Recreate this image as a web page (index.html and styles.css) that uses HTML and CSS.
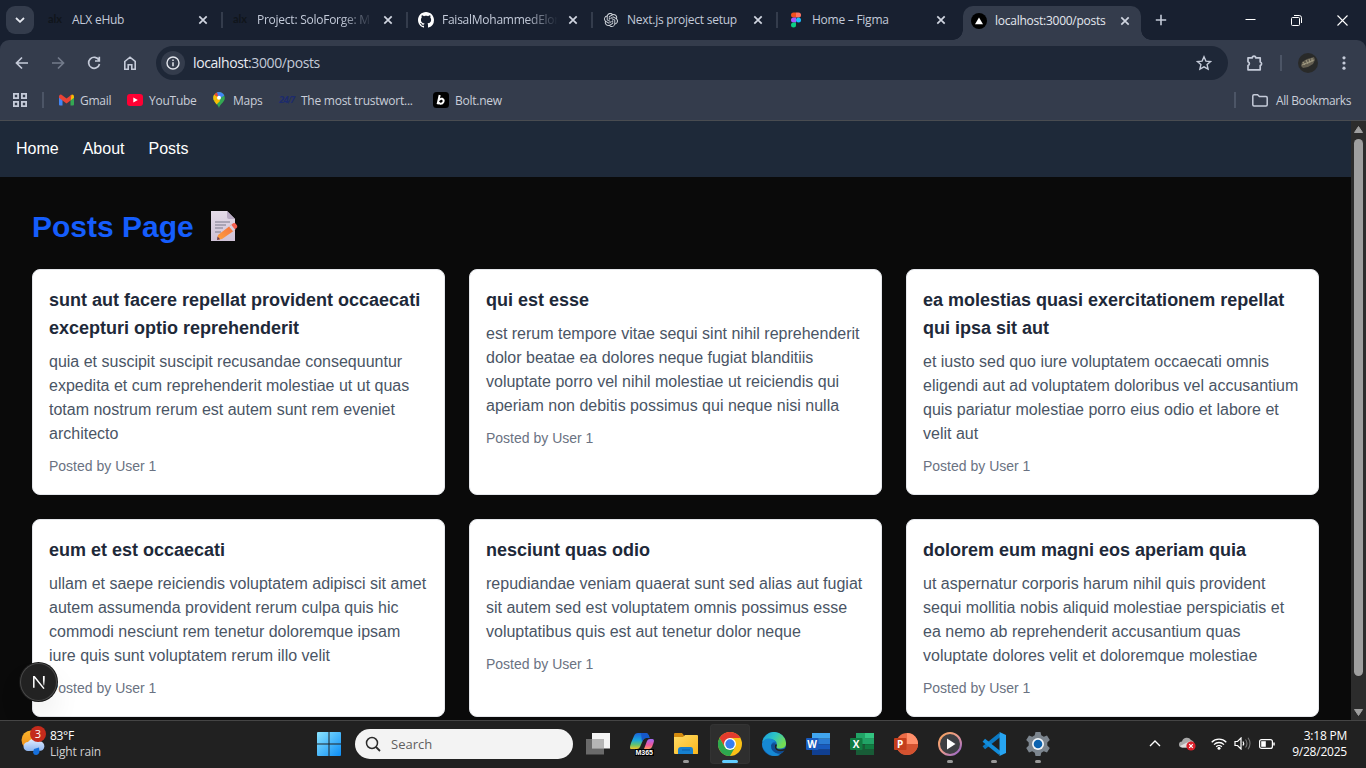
FILE: index.html
```html
<!DOCTYPE html>
<html lang="en">
<head>
<meta charset="utf-8">
<title>localhost:3000/posts</title>
<link rel="stylesheet" href="styles.css">
</head>
<body>
<svg class="defs" width="0" height="0">
  <defs>
    <linearGradient id="win" x1="0" y1="0" x2="1" y2="1"><stop offset="0" stop-color="#8be4ff"/><stop offset="1" stop-color="#0c8df5"/></linearGradient>
    <linearGradient id="sun" x1="0" y1="0" x2="0" y2="1"><stop offset="0" stop-color="#f9b42c"/><stop offset="1" stop-color="#ef8b17"/></linearGradient>
    <linearGradient id="cloud" x1="0" y1="0" x2="0" y2="1"><stop offset="0" stop-color="#e2edff"/><stop offset="1" stop-color="#8fb6ee"/></linearGradient>
    <linearGradient id="cop1" x1="0" y1="0" x2="0" y2="1"><stop offset="0" stop-color="#1b63d8"/><stop offset=".45" stop-color="#19a7dd"/><stop offset=".75" stop-color="#67c46a"/><stop offset="1" stop-color="#f2c32b"/></linearGradient>
    <linearGradient id="cop2" x1="0" y1="0" x2="0" y2="1"><stop offset="0" stop-color="#a06af5"/><stop offset=".6" stop-color="#f0569c"/><stop offset="1" stop-color="#ff9b62"/></linearGradient>
    <linearGradient id="fold" x1="0" y1="0" x2="1" y2="1"><stop offset="0" stop-color="#ffdc66"/><stop offset="1" stop-color="#f9b61c"/></linearGradient>
    <linearGradient id="edge1" x1="0" y1="0" x2="1" y2=".5"><stop offset="0" stop-color="#1a9be0"/><stop offset=".5" stop-color="#2cc3c6"/><stop offset="1" stop-color="#74dc52"/></linearGradient>
    <linearGradient id="ring" x1="0" y1="0" x2="1" y2="1"><stop offset="0" stop-color="#f6a25a"/><stop offset=".5" stop-color="#e89a90"/><stop offset="1" stop-color="#8d5ed0"/></linearGradient>
    <linearGradient id="paper" x1="0" y1="0" x2="0" y2="1"><stop offset="0" stop-color="#e4dbe8"/><stop offset="1" stop-color="#cfc2d6"/></linearGradient>
    <linearGradient id="pencil" x1="0" y1="1" x2="1" y2="0"><stop offset="0" stop-color="#ffa23c"/><stop offset="1" stop-color="#f36d42"/></linearGradient>
    <linearGradient id="nlet" gradientUnits="userSpaceOnUse" x1="0" y1="1" x2="0" y2="11"><stop offset=".3" stop-color="#fff"/><stop offset="1" stop-color="#fff" stop-opacity=".1"/></linearGradient>
    <symbol id="x" viewBox="0 0 10 10"><path d="M1.3 1.3l7.4 7.4M8.7 1.3l-7.4 7.4" stroke="currentColor" stroke-width="1.7"/></symbol>
  </defs>
</svg>

<header class="browser">
  <div class="tabstrip">
    <button class="tab-search"><svg width="10" height="6" viewBox="0 0 10 6"><path d="M1 1l4 3.8L9 1" fill="none" stroke="#e6e9f0" stroke-width="1.8"/></svg></button>
    <div class="tab"><span class="fav alx">alx</span><span class="tab-title">ALX eHub</span><svg class="close"><use href="#x"/></svg><i class="sep"></i></div>
    <div class="tab"><span class="fav alx">alx</span><span class="tab-title fade">Project: SoloForge: M</span><svg class="close"><use href="#x"/></svg><i class="sep"></i></div>
    <div class="tab"><svg class="fav" viewBox="0 0 16 16"><path fill="#fff" d="M8 0C3.58 0 0 3.58 0 8c0 3.54 2.29 6.53 5.47 7.59.4.07.55-.17.55-.38 0-.19-.01-.82-.01-1.49-2.01.37-2.53-.49-2.69-.94-.09-.23-.48-.94-.82-1.13-.28-.15-.68-.52-.01-.53.63-.01 1.08.58 1.23.82.72 1.21 1.87.87 2.33.66.07-.52.28-.87.51-1.07-1.78-.2-3.64-.89-3.64-3.95 0-.87.31-1.59.82-2.15-.08-.2-.36-1.02.08-2.12 0 0 .67-.21 2.2.82.64-.18 1.32-.27 2-.27s1.36.09 2 .27c1.53-1.04 2.2-.82 2.2-.82.44 1.1.16 1.92.08 2.12.51.56.82 1.27.82 2.15 0 3.07-1.87 3.75-3.65 3.95.29.25.54.73.54 1.48 0 1.07-.01 1.93-.01 2.2 0 .21.15.46.55.38A8.01 8.01 0 0 0 16 8c0-4.42-3.58-8-8-8z"/></svg><span class="tab-title fade">FaisalMohammedElor</span><svg class="close"><use href="#x"/></svg><i class="sep"></i></div>
    <div class="tab"><svg class="fav gpt" viewBox="0 0 24 24"><path fill="#d5d9df" d="M22.28 9.82a5.98 5.98 0 0 0-.52-4.91 6.05 6.05 0 0 0-6.51-2.9A6.07 6.07 0 0 0 4.98 4.18a5.98 5.98 0 0 0-4 2.9 6.05 6.05 0 0 0 .74 7.1 5.98 5.98 0 0 0 .51 4.91 6.05 6.05 0 0 0 6.52 2.9A5.98 5.98 0 0 0 13.26 24a6.06 6.06 0 0 0 5.77-4.21 5.99 5.99 0 0 0 4-2.9 6.06 6.06 0 0 0-.75-7.07zm-9.02 12.61a4.48 4.48 0 0 1-2.88-1.04l.14-.08 4.78-2.76a.8.8 0 0 0 .39-.68v-6.74l2.02 1.17v5.62a4.5 4.5 0 0 1-4.45 4.51zM3.6 18.3a4.47 4.47 0 0 1-.54-3.01l.14.08 4.78 2.76a.77.77 0 0 0 .78 0l5.84-3.37v2.33L9.74 19.95A4.5 4.5 0 0 1 3.6 18.3zM2.34 7.9a4.49 4.49 0 0 1 2.37-1.98v5.68a.77.77 0 0 0 .39.68l5.81 3.35-2.02 1.17-4.83-2.79A4.5 4.5 0 0 1 2.34 7.9zm16.6 3.86l-5.84-3.39L15.12 7.2l4.83 2.79a4.49 4.49 0 0 1-.68 8.1v-5.67a.79.79 0 0 0-.33-.66zm2.01-3.03l-.14-.09-4.77-2.78a.78.78 0 0 0-.79 0L9.41 9.23V6.9l4.86-2.8a4.5 4.5 0 0 1 6.68 4.63zM8.31 12.86l-2.02-1.16V6.07a4.5 4.5 0 0 1 7.38-3.45l-.14.08-4.78 2.76a.8.8 0 0 0-.39.68zm1.1-2.36L12 9l2.61 1.5v3L12 15l-2.6-1.5z"/></svg><span class="tab-title">Next.js project setup</span><svg class="close"><use href="#x"/></svg><i class="sep"></i></div>
    <div class="tab last"><svg class="fav" viewBox="0 0 16 16"><path fill="#f24e1e" d="M8 .5H5.5a2.5 2.5 0 0 0 0 5H8z"/><path fill="#ff7262" d="M8 .5h2.5a2.5 2.5 0 0 1 0 5H8z"/><path fill="#a259ff" d="M8 5.5H5.5a2.5 2.5 0 0 0 0 5H8z"/><circle cx="10.5" cy="8" r="2.5" fill="#1abcfe"/><path fill="#0acf83" d="M8 10.5H5.5A2.5 2.5 0 1 0 8 13z"/></svg><span class="tab-title">Home – Figma</span><svg class="close"><use href="#x"/></svg></div>
    <div class="tab active"><svg class="fav" viewBox="0 0 16 16"><circle cx="8" cy="8" r="8"/><path d="M8 4.5l4 6.7H4z" fill="#fff"/></svg><span class="tab-title">localhost:3000/posts</span><svg class="close"><use href="#x"/></svg></div>
    <svg class="newtab" width="12" height="12" viewBox="0 0 12 12"><path d="M6 .8v10.4M.8 6h10.4" stroke="#c4cad8" stroke-width="1.6"/></svg>
    <div class="winctl">
      <svg width="11" height="11" viewBox="0 0 11 11"><path d="M.5 4.5h10" stroke="#fff"/></svg>
      <svg width="11" height="11" viewBox="0 0 11 11"><path d="M3 .5h5.2a2.3 2.3 0 0 1 2.3 2.3V8" fill="none" stroke="#fff"/><rect x=".5" y="2.5" width="8" height="8" rx="1" fill="none" stroke="#fff"/></svg>
      <svg width="11" height="11" viewBox="0 0 11 11"><path d="M.5.5l10 10M10.5.5l-10 10" stroke="#fff" stroke-width="1.1"/></svg>
    </div>
  </div>

  <div class="toolbar">
    <div class="navrow">
      <div class="navbtns">
        <svg width="16" height="16" viewBox="0 0 16 16"><path d="M14 8H3M8 2.5L2.5 8 8 13.5" fill="none" stroke="#c5cbd9" stroke-width="1.7"/></svg>
        <svg width="16" height="16" viewBox="0 0 16 16"><path d="M2 8h11M8 2.500L13.500 8 8 13.500" fill="none" stroke="#737b8b" stroke-width="1.7"/></svg>
        <svg width="16" height="16" viewBox="0 0 16 16"><path d="M13 5.2A5.5 5.5 0 1 0 13.500 9M13.300 1.800v4.200H9" fill="none" stroke="#c5cbd9" stroke-width="1.7"/></svg>
        <svg width="16" height="16" viewBox="0 0 16 16"><path d="M2.800 6.500L8 2.200l5.200 4.300v7.700H9.800V9.700H6.200v4.500H2.800z" fill="none" stroke="#c5cbd9" stroke-width="1.6"/></svg>
      </div>
      <div class="address">
        <span class="info"><svg width="14" height="14" viewBox="0 0 14 14"><circle cx="7" cy="7" r="6" fill="none" stroke="#e3e6ed" stroke-width="1.4"/><path d="M7 6.200v4M7 3.500v1.500" stroke="#e3e6ed" stroke-width="1.5"/></svg></span>
        <span class="url"><b>localhost</b>:3000/posts</span>
        <svg class="star" width="16" height="16" viewBox="0 0 16 16"><path d="M8 1.800l1.900 4.300 4.700.4-3.500 3.100 1 4.600L8 11.800l-4.100 2.400 1-4.600L1.400 6.500l4.700-.4z" fill="none" stroke="#c5cbd9" stroke-width="1.4"/></svg>
      </div>
      <div class="actions">
        <svg width="18" height="18" viewBox="0 0 18 18"><path d="M2 3.800h4.300a1.700 1.700 0 0 1 3.400 0h4.500V8a1.800 1.800 0 0 1 0 3.500v4.300H2v-4.300a2 2 0 0 0 0-3.800z" fill="none" stroke="#c5cbd9" stroke-width="1.7" stroke-linejoin="round"/></svg>
        <i class="vline"></i>
        <svg width="20" height="20" viewBox="0 0 20 20"><circle cx="10" cy="10" r="10" fill="#292a29"/><path d="M3 13l1-4 5-3 7-2 1 3-2 4-5 3-5 1z" fill="#625d50"/><path d="M5 9l2 3M8 7l2 4M11 6l1 4M14 5v4M4 12l12-5" stroke="#a69f86" stroke-width=".9"/></svg>
        <svg width="4" height="16" viewBox="0 0 4 16"><g fill="#c5cbd9"><circle cx="2" cy="2.800" r="1.600"/><circle cx="2" cy="8" r="1.600"/><circle cx="2" cy="13.200" r="1.600"/></g></svg>
      </div>
    </div>
    <div class="bookmarks">
      <svg width="14" height="14" viewBox="0 0 14 14"><path d="M.9.9h4.200v4.200H.9zM8.900.9h4.200v4.200H8.900zM.9 8.900h4.200v4.200H.9zM8.900 8.900h4.200v4.200H8.900z" fill="none" stroke="#c5cbd9" stroke-width="1.800"/></svg>
      <i class="vline"></i>
      <span class="bm b1"><svg width="15" height="12" viewBox="0 0 15 12"><path d="M0 2v8.500a1 1 0 0 0 1 1h2.500V5z" fill="#4285f4"/><path d="M15 2v8.500a1 1 0 0 1-1 1h-2.500V5z" fill="#34a853"/><path d="M11.500 1.500L13 .5q2 0 2 2v1.200L11.500 6.500z" fill="#fbbc04"/><path d="M0 3.700V2.500Q.3 0 2.500.7l5 3.800 5-3.800-1 5.800-4 3-4-3z" fill="#ea4335"/></svg>Gmail</span>
      <span class="bm b2"><svg width="16" height="12" viewBox="0 0 16 12"><rect width="16" height="12" rx="3" fill="#ff0033"/><path d="M6.300 3.500L10.800 6l-4.500 2.500z" fill="#fff"/></svg>YouTube</span>
      <span class="bm b3"><svg width="12" height="16" viewBox="0 0 12 16"><path d="M6 16C5 12 0 10 .2 5.800a5.800 5.800 0 0 1 11.600 0C12 10 7 12 6 16z" fill="#34a853"/><path d="M6 6L1.200 9Q.2 7.500.2 5.800q0-1.700 1-3.200z" fill="#fbbc04"/><path d="M6 6L1.200 2.600A5.800 5.800 0 0 1 4.500.2z" fill="#ea4335"/><path d="M4 .3a5.800 5.800 0 0 1 7.300 3.300L6 7z" fill="#4285f4"/><path d="M1.200 9L6 5.500 7 9l-3.500 3.500z" fill="#fbbc04"/><circle cx="6" cy="5.800" r="2" fill="#fff"/></svg>Maps</span>
      <span class="bm b4"><em>24/7</em>The most trustwort...</span>
      <span class="bm b5"><svg width="16" height="16" viewBox="0 0 16 16"><rect width="16" height="16" rx="3.500"/><path d="M6.700 3L4.600 12.300M6 8.200q1.400-2 3.400-1.400 1.800.8 1 3-1 2.200-3 2-1.500-.2-1.700-1.600" fill="none" stroke="#fff" stroke-width="2"/></svg>Bolt.new</span>
      <span class="allbm"><i class="vline"></i><svg width="16" height="13" viewBox="0 0 16 13"><path d="M.8 10.700V2q0-1.200 1.200-1.200h3.600l1.800 1.700H14q1.200 0 1.200 1.200v7q0 1.200-1.200 1.200H2q-1.200 0-1.200-1.200z" fill="none" stroke="#c5cbd9" stroke-width="1.5"/></svg><span class="b6">All Bookmarks</span></span>
    </div>
  </div>
</header>

<div class="viewport">
  <div class="page">
    <nav class="sitenav"><a>Home</a><a>About</a><a>Posts</a></nav>
    <main class="posts">
      <h1>Posts Page <svg width="28" height="32" viewBox="0 0 28 32"><path d="M1 1h16l8 8v22H1z" fill="url(#paper)"/><path d="M17 1l8 8h-6q-2 0-2-2z" fill="#b9abc4"/><path d="M5 12h15M5 15h11M5 18h8M5 22h6" stroke="#9a96a8" stroke-width="1.4"/><path d="M7 30l1-5L21 15l4 5-13 9z" fill="url(#pencil)"/><path d="M19 16.500l2.500-1.800 4 5-2.500 1.600z" fill="#d8d0e0"/><path d="M21.300 14.700l2.200-1.600q1.300-.7 2.500.8l1 1.500q.8 1.600-.4 2.600l-1.800 1.300z" fill="#f4604f"/><path d="M7 30l.6-3.500 2.500 2.700z" fill="#6b3c5a"/></svg></h1>
      <div class="grid">
        <article class="card"><h2>sunt aut facere repellat provident occaecati excepturi optio reprehenderit</h2><p>quia et suscipit suscipit recusandae consequuntur expedita et cum reprehenderit molestiae ut ut quas totam nostrum rerum est autem sunt rem eveniet architecto</p><footer><small>Posted by User 1</small></footer></article>
        <article class="card"><h2>qui est esse</h2><p>est rerum tempore vitae sequi sint nihil reprehenderit dolor beatae ea dolores neque fugiat blanditiis voluptate porro vel nihil molestiae ut reiciendis qui aperiam non debitis possimus qui neque nisi nulla</p><footer><small>Posted by User 1</small></footer></article>
        <article class="card"><h2>ea molestias quasi exercitationem repellat qui ipsa sit aut</h2><p>et iusto sed quo iure voluptatem occaecati omnis eligendi aut ad voluptatem doloribus vel accusantium quis pariatur molestiae porro eius odio et labore et velit aut</p><footer><small>Posted by User 1</small></footer></article>
        <article class="card"><h2>eum et est occaecati</h2><p>ullam et saepe reiciendis voluptatem adipisci sit amet autem assumenda provident rerum culpa quis hic commodi nesciunt rem tenetur doloremque ipsam iure quis sunt voluptatem rerum illo velit</p><footer><small>Posted by User 1</small></footer></article>
        <article class="card"><h2>nesciunt quas odio</h2><p>repudiandae veniam quaerat sunt sed alias aut fugiat sit autem sed est voluptatem omnis possimus esse voluptatibus quis est aut tenetur dolor neque</p><footer><small>Posted by User 1</small></footer></article>
        <article class="card"><h2>dolorem eum magni eos aperiam quia</h2><p>ut aspernatur corporis harum nihil quis provident sequi mollitia nobis aliquid molestiae perspiciatis et ea nemo ab reprehenderit accusantium quas voluptate dolores velit et doloremque molestiae</p><footer><small>Posted by User 1</small></footer></article>
      </div>
    </main>
    <div class="devbadge"><svg width="14" height="14" viewBox="0 0 14 14"><path d="M1.800 12.800V1.800h.6L12 13.600" fill="none" stroke="#fff" stroke-width="1.5"/><path d="M11.700 1v10" stroke="url(#nlet)" stroke-width="1.5"/><path d="M11 1h1.500v9H11z" fill="url(#nlet)"/></svg></div>
  </div>
  <div class="scroll">
    <svg width="9" height="7" viewBox="0 0 9 7"><path d="M4.500.5L8.500 6.500h-8z" fill="#9f9f9f" stroke="#9f9f9f" stroke-linejoin="round"/></svg>
    <i class="thumb"></i>
    <svg width="9" height="7" viewBox="0 0 9 7"><path d="M4.500 6.500L8.500.5h-8z" fill="#9f9f9f" stroke="#9f9f9f" stroke-linejoin="round"/></svg>
  </div>
</div>

<footer class="taskbar">
  <div class="weather">
    <svg width="28" height="30" viewBox="0 0 28 30"><circle cx="11" cy="14" r="9.500" fill="url(#sun)"/><path d="M8 25a4.500 4.500 0 0 1 0-9 6 6 0 0 1 10-.5 4.500 4.500 0 0 1 3 9.300z" fill="url(#cloud)"/><path d="M14 23l5-1.500.5 4.500q-1 3-3.500 3t-3-2.500z" fill="#1670dd"/></svg>
    <span class="count">3</span>
    <div class="wtext"><span class="w1">83°F</span><span class="w2">Light rain</span></div>
  </div>
  <div class="apps">
    <svg class="start" width="24" height="24" viewBox="0 0 24 24"><path d="M1 0h10.500v11.500H0V1q0-1 1-1zM12.500 0H23q1 0 1 1v10.500H12.500zM0 12.500h11.500V24H1q-1 0-1-1zM12.500 12.500H24V23q0 1-1 1H12.500z" fill="url(#win)"/></svg>
    <div class="search"><svg width="16" height="16" viewBox="0 0 16 16"><circle cx="7" cy="7" r="5.500" fill="none" stroke="#2b2b2b" stroke-width="1.5"/><path d="M11 11l4 4" stroke="#2b2b2b" stroke-width="1.800"/></svg><span>Search</span></div>
    <span class="app"><svg viewBox="0 0 24 24"><path d="M6 1h18v15.500H6z" fill="#f3f3f3"/><path d="M0 7h18v15.500H0z" fill="#777" opacity=".85"/><path d="M6 7h12v9.500H6z" fill="#b5b5b5"/></svg></span>
    <span class="app"><svg viewBox="0 0 24 24"><path d="M1 17Q-1 17 1 11L4 4q1-3 4-3h8q2 0 3 3l.5 2H16q-2 0-3 2l-3 7q-1 2-3 2z" fill="url(#cop1)"/><path d="M14 17l3-8q.8-2 3-2h2.500q2.300 0 1 4l-1.500 4q-1 2-3 2z" fill="url(#cop2)"/><path d="M11 1h5q2 0 3 3l.5 2H16q-2 0-3 2l-1 2z" fill="#1558c9"/><path d="M5 17h19v7H5z" fill="#000"/><text x="5.500" y="23" class="m365" textLength="17.500">M365</text></svg></span>
    <span class="app run"><svg viewBox="0 0 24 24"><path d="M0 2q0-1 1-1h7l2 2.500V8H0z" fill="#d38a0d"/><path d="M0 5h9l2-2h12q1 0 1 1v17.500q0 .5-1 .5H1q-1 0-1-1z" fill="url(#fold)"/><path d="M4 22v-4q0-3 3-3h10q2 0 2 2.500V22z" fill="#1680cf"/><path d="M8 18h8" stroke="#0c5da8"/></svg></span>
    <span class="app run current"><svg viewBox="0 0 24 24"><circle cx="12" cy="12" r="12" fill="#fbc116"/><path d="M1.600 6A12 12 0 0 1 22.400 6H12L6.800 15z" fill="#e33b2e"/><path d="M1.600 6l5.200 9 5.200 3 0 6A12 12 0 0 1 1.600 6z" fill="#2da94f"/><path d="M12 24l5.200-9L12 17.500 6.800 15z" fill="#2da94f"/><circle cx="12" cy="12" r="6" fill="#fff"/><circle cx="12" cy="12" r="4.700" fill="#367ef0"/></svg></span>
    <span class="app"><svg viewBox="0 0 24 24"><circle cx="12" cy="12" r="12" fill="#1367b8"/><path d="M.2 10A12 12 0 0 1 24 11q.4 5-5 5.500-5 .2-4.500-2Q16 10 12 8 6 5.500.2 10z" fill="url(#edge1)"/><path d="M0 12q1-5 6-5.500 5-.5 8 3.500-4-1-5 3.500Q9 20 18 23q-8 3-14-3Q0 16 0 12z" fill="#1689d4"/><path d="M9 13.500q0 7 8 8 3 0 5.500-3Q14 21 12.500 15q-.5-2 .9-3.600Q10 10.500 9 13.500z" fill="#0f4c92"/><path d="M14.500 14.500q-1 2.500 3.500 3 3 0 6-1.500-.8 1.500-2 2.800-7 1.700-9-2.800-.8-3.500 1.200-4 1.200 1 .3 2.500z" fill="#212121"/></svg></span>
    <span class="app"><svg viewBox="0 0 24 24"><path d="M6 1h18v5.700H6z" fill="#41a5ee"/><path d="M6 6.700h18v5.500H6z" fill="#2b7cd3"/><path d="M6 12.200h18v5.500H6z" fill="#185abd"/><path d="M6 17.700h18V23H6z" fill="#103f91"/><rect y="6" width="12.500" height="12" rx="1" fill="#185abd"/><text x="6.200" y="15.500" class="office">W</text></svg></span>
    <span class="app"><svg viewBox="0 0 24 24"><path d="M6 1h9v11H6z" fill="#21a366"/><path d="M15 1h9v5.700h-9z" fill="#33c481"/><path d="M15 6.700h9v5.500h-9z" fill="#21a366"/><path d="M6 12.200h9V23H6z" fill="#185c37"/><path d="M15 12.200h9v5.500h-9z" fill="#107c41"/><path d="M15 17.700h9V23h-9z" fill="#185c37"/><rect y="6" width="12.500" height="12" rx="1" fill="#107c41"/><text x="6.200" y="15.500" class="office">X</text></svg></span>
    <span class="app"><svg viewBox="0 0 24 24"><circle cx="13" cy="12" r="11" fill="#ed6c47"/><path d="M13 1a11 11 0 0 1 11 11H13z" fill="#ff8f6b"/><path d="M2 12h22a11 11 0 0 1-22 0z" fill="#d35230"/><rect y="6" width="12.500" height="12" rx="1" fill="#c43e1c"/><text x="6.200" y="15.500" class="office">P</text></svg></span>
    <span class="app run"><svg viewBox="0 0 24 24"><circle cx="12" cy="12" r="11" fill="#3d3f43" stroke="url(#ring)" stroke-width="2"/><path d="M9 6.500l8.500 5.500L9 17.500z" fill="#fff"/></svg></span>
    <span class="app run"><svg viewBox="0 0 24 24"><path d="M1.800 15.800L18 2.800" stroke="#0b79c4" stroke-width="4"/><path d="M1.800 8.200L18 21.200" stroke="#128ddb" stroke-width="4"/><path d="M17.500 0L24 3v18l-6.500 3z" fill="#27a5f2"/></svg></span>
    <span class="app run"><svg viewBox="0 0 24 24"><path d="M9.500 0h5l.8 3.300 2.500 1.400L21 3.500l2.800 4.400-2.500 2.500v3.200l2.500 2.500-2.800 4.400-3.200-1.200-2.500 1.400-.8 3.300h-5l-.8-3.300-2.500-1.400L3 20.500.2 16.100l2.500-2.500v-3.200L.2 7.900 3 3.500l3.200 1.200 2.500-1.400z" fill="#7c858e"/><circle cx="12" cy="12" r="6" fill="#f1f4f7"/><circle cx="12" cy="12" r="4.300" fill="#0b62af"/></svg></span>
  </div>
  <div class="tray">
    <svg width="12" height="7" viewBox="0 0 12 7"><path d="M1 6l5-5 5 5" fill="none" stroke="#fff" stroke-width="1.4"/></svg>
    <svg class="cloudx" width="18" height="14" viewBox="0 0 18 14"><path d="M3 10.500a3 3 0 0 1 0-6 5 5 0 0 1 9-1.500 4 4 0 0 1 1 7.500z" fill="#a9a9a9"/><path d="M1 9L11 4l2 6.500H3z" fill="#dedede"/><circle cx="12" cy="9" r="4.600" fill="#d9202a"/><path d="M10.200 7.200l3.600 3.600M13.800 7.200l-3.600 3.600" stroke="#fff" stroke-width="1.2"/></svg>
    <svg class="wifi" width="16" height="13" viewBox="0 0 16 13"><g fill="none" stroke="#fff" stroke-width="1.3"><path d="M.7 5.200a10.300 10.300 0 0 1 14.600 0M3 7.600a7 7 0 0 1 10 0M5.200 9.800a4 4 0 0 1 5.600 0"/></g><circle cx="8" cy="11.300" r="1.500" fill="#fff"/></svg>
    <svg class="vol" width="17" height="13" viewBox="0 0 17 13"><path d="M1 4.500h2.500l3.500-3.500v11l-3.500-3.500H1z" fill="none" stroke="#fff" stroke-width="1.2"/><path d="M9 4.500q1.300 2 0 4" fill="none" stroke="#fff" stroke-width="1.2"/><path d="M11.500 2.500q3 4 0 8M14 .8q4 5.700 0 11.400" fill="none" stroke="#777" stroke-width="1.1"/></svg>
    <svg class="bat" width="16" height="10" viewBox="0 0 16 10"><rect x=".6" y=".6" width="12.800" height="8.800" rx="2" fill="none" stroke="#fff" stroke-width="1.2"/><rect x="2.200" y="2.200" width="4.600" height="5.600" fill="#fff"/><path d="M15 3.500v3" stroke="#fff" stroke-width="1.5"/></svg>
    <div class="clock"><span>3:18 PM</span><span>9/28/2025</span></div>
  </div>
</footer>
</body>
</html>
```
FILE: styles.css
```css
* { box-sizing: border-box; }
body { margin: 0; width: 1366px; height: 768px; overflow: hidden; background: #0a0a0a; font-family: "Open Sans", "Noto Sans", sans-serif; font-size: 12px; }
svg { display: block; flex: none; }
i { font-style: normal; }
.defs { position: absolute; }

/* Browser chrome */
.browser { height: 121px; background: #182030; }
.tabstrip { height: 40px; display: flex; align-items: center; padding-left: 6px; }
.tab-search { width: 28px; height: 28px; padding: 0; border: 0; border-radius: 9px; background: #343c4c; display: flex; align-items: center; justify-content: center; margin-right: 6px; flex: none; }
.tab { position: relative; width: 185px; height: 40px; padding: 0 17px 0 8px; display: flex; align-items: center; flex: none; color: #c3cad9; }
.last { width: 183px; padding-right: 17px; }
.fav { width: 16px; height: 16px; margin-right: 8px; flex: none; }
.gpt { padding: 1px; }
.alx { color: #10151b; font: bold 11px/14px Lato, sans-serif; }
.tab-title { flex: 1; white-space: nowrap; line-height: 20px; }
.fade { -webkit-mask-image: linear-gradient(90deg, #000 84px, transparent 116px); mask-image: linear-gradient(90deg, #000 84px, transparent 116px); margin-right: 5px; }
.close { width: 10px; height: 10px; color: #d0d5e0; }
.sep { position: absolute; right: 2px; top: 12px; width: 2px; height: 16px; background: #343c4c; }
.active { color: #e5e8ef; width: 178px; height: 34px; align-self: flex-end; background: #343c4c; border-radius: 10px 10px 0 0; padding-right: 11px; padding-bottom: 5px; }
.active::before, .active::after { content: ""; position: absolute; bottom: 0; width: 10px; height: 10px; }
.active::before { left: -10px; background: radial-gradient(circle at 0 0, transparent 9.5px, #343c4c 10px); }
.active::after { right: -10px; background: radial-gradient(circle at 100% 0, transparent 9.5px, #343c4c 10px); }
.newtab { margin-left: 14px; }
.winctl { margin-left: auto; margin-right: 18px; display: flex; gap: 35px; }
.toolbar { height: 81px; background: #343c4c; border-radius: 9px 9px 0 0; border-bottom: 1px solid #494c51; }
.navrow { height: 46px; display: flex; align-items: center; padding-left: 14px; }
.navbtns { display: flex; gap: 20px; width: 142px; }
.address { width: 1072px; height: 34px; border-radius: 17px; background: #1e2737; display: flex; align-items: center; padding: 0 16px 0 5px; }
.info { width: 24px; height: 24px; border-radius: 50%; background: #343c4c; display: flex; align-items: center; justify-content: center; margin-right: 8px; }
.url { color: #c3cad7; font-size: 14px; letter-spacing: -.4px; padding-bottom: 1px; }
.url b { color: #e9ecf2; font-weight: 400; }
.star { margin-left: auto; }
.actions { display: flex; align-items: center; margin-left: 18px; }
.vline { width: 2px; height: 16px; background: #4c5566; flex: none; }
.actions .vline { margin: 0 16px; }
.actions svg:last-child { margin-left: 24px; }
.bookmarks { height: 28px; display: flex; align-items: center; padding-left: 13px; color: #c9ced9; white-space: nowrap; }
.bookmarks > .vline { margin: 0 15px; }
.bm { display: flex; align-items: center; }
.bm svg { margin-right: 6px; }
.bm em { color: #1d2b6c; font: italic bold 8px "DejaVu Sans", sans-serif; letter-spacing: -1px; width: 22px; }
.b1 { width: 68px; }
.b2 { width: 86px; }
.b3 { width: 66px; }
.b3 svg { margin-right: 8px; }
.b4 { width: 154px; letter-spacing: -.3px; }
.allbm { margin-left: auto; display: flex; align-items: center; gap: 8px; margin-right: 15px; }
.allbm .vline { margin-right: 8px; }
.tab-title, .bm { letter-spacing: -.25px; }
.b6 { letter-spacing: -.38px; }

/* Site */
.viewport { height: 599px; display: flex; }
.page { position: relative; width: 1351px; overflow: hidden; font-family: "Liberation Sans", Arial, sans-serif; font-size: 16px; line-height: 24px; }
.sitenav { height: 56px; background: #1e2939; color: #fff; padding: 16px; display: flex; gap: 24px; }
.posts { padding: 32px; }
h1 { margin: 0 0 24px; color: #155dfc; font-size: 30px; line-height: 36px; display: flex; align-items: center; gap: 16px; }
h1 svg { margin-top: -2px; }
.grid { display: grid; grid-template-columns: repeat(3, 1fr); gap: 24px; }
.card { background: #fff; border: 1px solid #e5e7eb; border-radius: 8px; padding: 16px; }
.card h2 { margin: 0 0 8px; font-size: 18px; line-height: 28px; color: #1e2939; }
.card p { margin: 0 0 8px; color: #4a5565; }
.card footer { height: 24px; }
.card small { font-size: 14px; color: #6a7282; }
.devbadge { position: absolute; left: 21px; top: 543px; width: 35px; height: 36px; border-radius: 50%; background: #222; box-shadow: 0 0 0 1px #4a4a4a, 0 0 0 2px #181818, 0 16px 32px -8px rgba(0,0,0,.24); display: flex; align-items: center; justify-content: center; }
.scroll { width: 15px; background: #2c2c2c; display: flex; flex-direction: column; align-items: center; padding: 5px 0 4px; }
.thumb { width: 9px; height: 537px; margin: 6px 0 33px; border-radius: 5px; background: #9f9f9f; }

/* Taskbar */
.taskbar { height: 48px; background: #212121; border-top: 1px solid #454545; padding-bottom: 2px; display: flex; align-items: center; color: #fff; }
.weather { position: relative; width: 316px; padding-left: 20px; display: flex; gap: 2px; }
.weather svg { margin-top: -2px; }
.count { position: absolute; left: 30px; top: -2px; width: 16px; height: 16px; border-radius: 50%; background: #c42b1c; text-align: center; line-height: 16px; font-size: 11px; }
.wtext, .clock { display: flex; flex-direction: column; line-height: 16px; font-size: 12px; letter-spacing: -.3px; }
.w2 { color: #d0d0d0; letter-spacing: -.15px; }
.apps { display: flex; align-items: center; }
.search { width: 218px; height: 30px; margin: 0 3px 0 14px; border-radius: 15px; background: #f3f3f3; display: flex; align-items: center; padding-left: 10px; gap: 10px; color: #5f5f5f; font-size: 13px; }
.app { width: 40px; height: 40px; margin: 0 2px; border-radius: 4px; display: flex; align-items: center; justify-content: center; position: relative; }
.app svg { width: 24px; height: 24px; }
.start { margin-left: 1px; }
.current { background: #2e2e2e; box-shadow: 0 0 0 1px #333 inset; }
.run::after { content: ""; position: absolute; bottom: 1px; left: 17px; width: 6px; height: 3px; border-radius: 2px; background: #999; }
.current::after { width: 16px; left: 12px; background: #60cdff; }
.office { fill: #fff; font: bold 10px "Open Sans", sans-serif; text-anchor: middle; }
.m365 { fill: #fff; font: bold 7px "Liberation Sans", sans-serif; }
.tray { margin-left: auto; display: flex; align-items: center; margin-right: 19px; }
.cloudx { margin-left: 18px; }
.wifi { margin-left: 14px; }
.vol { margin-left: 7px; }
.bat { margin-left: 8px; }
.clock { margin-left: 15px; width: 57px; text-align: right; white-space: nowrap; align-items: flex-end; letter-spacing: -.22px; }
```
